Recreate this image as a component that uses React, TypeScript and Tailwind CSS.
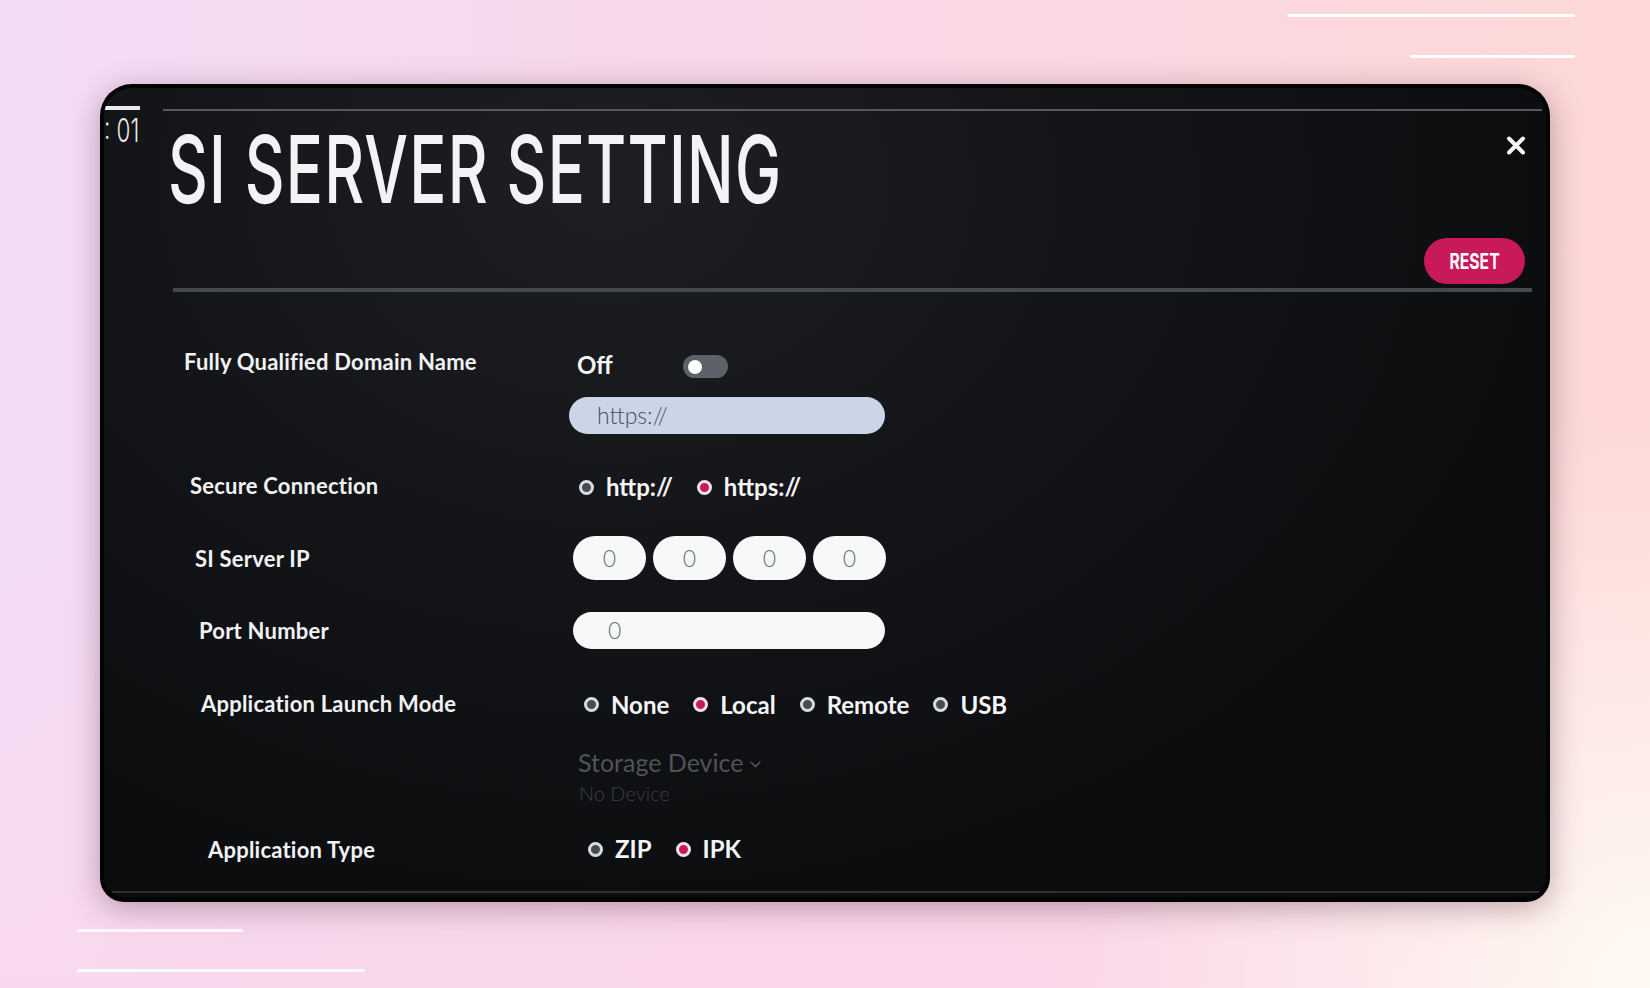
import { ChevronDown } from "lucide-react";

const label = "font-['Lato',sans-serif] font-bold text-[22px] text-[#f1f2f4] tracking-[0.01em]";
const option = "font-['Lato',sans-serif] font-bold text-[24px] text-[#f4f5f7]";

function Radio({ text, on }: { text: string; on?: boolean }) {
  return (
    <div className="flex items-center gap-[12px]">
      <span
        className={
          on
            ? "h-[15px] w-[15px] rounded-full border-[3px] border-[#f1e2e9] bg-[#c9195d]"
            : "h-[15px] w-[15px] rounded-full border-[3px] border-[#d8dbe0] bg-[#474b53]"
        }
      />
      <span className={option}>{text}</span>
    </div>
  );
}

function CloseIcon() {
  return (
    <svg width="20" height="21" viewBox="0 0 20 21" fill="none">
      <path d="M3 3.5 L17 17.5 M17 3.5 L3 17.5" stroke="#f5f6f8" strokeWidth="4" strokeLinecap="round" />
    </svg>
  );
}

export default function App() {
  return (
    <div className="flex h-[988px] w-[1650px] flex-col overflow-hidden bg-[radial-gradient(circle_at_100%_100%,#fffaf1_0%,rgba(255,250,241,0)_30%),linear-gradient(to_bottom,rgba(253,228,247,0)_55%,rgba(250,214,236,0.7)_100%),linear-gradient(to_right,#f3ddf6_0%,#f8d7ea_45%,#fdd8d6_100%)]">
      {/* top decoration */}
      <div className="flex h-[84px] flex-col items-end pr-[75px]">
        <div className="mt-[14px] h-[3px] w-[288px] rounded-full bg-white" />
        <div className="mt-[38px] h-[3px] w-[165px] rounded-full bg-white" />
      </div>

      {/* tv */}
      <div className="mx-[100px] h-[818px] rounded-t-[32px] rounded-b-[24px] bg-[#030303] px-[4px] pt-[4px] pb-[5px] shadow-[0_6px_30px_rgba(70,30,50,0.35)]">
        <div className="flex h-full flex-col overflow-hidden rounded-t-[28px] rounded-b-[20px] bg-[radial-gradient(ellipse_at_35%_12%,#1e1f23_0%,#131417_40%,#0b0c0e_78%)]">
          {/* top strip */}
          <div className="flex h-[26px] items-start pt-[18px]">
            <div className="h-[4px] w-[36px] bg-[#e9eaec]" />
            <div className="ml-[23px] mt-[3px] h-[2px] w-[1379px] bg-[#55585d]" />
          </div>

          {/* header */}
          <div className="flex h-[102px] items-start">
            <div className="w-[64px] pt-[1px]">
              <span className="inline-block origin-left scale-x-[0.7] font-['Inter',sans-serif] text-[32px] font-light leading-none text-[#e8e9eb]">
                : 01
              </span>
            </div>
            <div className="flex-1 pt-[8px]">
              <span className="inline-block origin-left scale-x-[0.656] font-['Inter',sans-serif] text-[94px] font-medium leading-none tracking-[0.02em] text-[#f2f3f5]">
                SI SERVER SETTING
              </span>
            </div>
            <div className="mr-[20px] mt-[21px]">
              <CloseIcon />
            </div>
          </div>

          {/* reset */}
          <div className="mt-[22px] flex justify-end pr-[21px]">
            <div className="flex h-[46px] w-[101px] items-center justify-center rounded-full bg-[#c81a5b]">
              <span className="inline-block scale-x-[0.75] font-['Inter',sans-serif] text-[21px] font-bold leading-none text-white">
                RESET
              </span>
            </div>
          </div>

          <div className="ml-[69px] mr-[14px] mt-[4px] h-[4px] bg-[#45484d]" />

          {/* fqdn */}
          <div className="mt-[57px] flex h-[28px] items-center">
            <div className={`w-[465px] pl-[80px] -mt-[4px] ${label}`}>Fully Qualified Domain Name</div>
            <span className={`ml-[8px] mt-[3px] ${option}`}>Off</span>
            <div className="ml-[70px] mt-[7px] flex h-[23px] w-[45px] items-center rounded-full bg-[#5d626a] pl-[5px]">
              <div className="h-[14px] w-[14px] rounded-full bg-white" />
            </div>
          </div>
          <div className="mt-[20px] flex h-[37px]">
            <div className="w-[465px]" />
            <div className="flex w-[316px] items-center rounded-full bg-[#cbd5e8] pl-[28px] font-['Lato',sans-serif] text-[23px] font-light text-[#4a4f58]">
              https://
            </div>
          </div>

          {/* secure */}
          <div className="mt-[37px] flex h-[28px] items-center">
            <div className={`w-[465px] pl-[86px] ${label}`}>Secure Connection</div>
            <div className="ml-[10px] mt-[4px] flex items-center gap-[24px]">
              <Radio text="http://" />
              <Radio text="https://" on />
            </div>
          </div>

          {/* ip */}
          <div className="mt-[37px] flex h-[44px] items-center">
            <div className={`w-[469px] pl-[91px] ${label}`}>SI Server IP</div>
            <div className="flex gap-[7px]">
              {["0", "0", "0", "0"].map((v, i) => (
                <div
                  key={i}
                  className="flex h-[44px] w-[73px] items-center justify-center rounded-full bg-[#f7f8f8] font-['Lato',sans-serif] text-[23px] font-light text-[#6d7179]"
                >
                  {v}
                </div>
              ))}
            </div>
          </div>

          {/* port */}
          <div className="mt-[32px] flex h-[37px] items-center">
            <div className={`w-[469px] pl-[95px] ${label}`}>Port Number</div>
            <div className="flex h-[37px] w-[312px] items-center rounded-full bg-[#f7f8f8] pl-[35px] font-['Lato',sans-serif] text-[23px] font-light text-[#6d7179]">
              0
            </div>
          </div>

          {/* launch mode */}
          <div className="mt-[40px] flex h-[28px] items-center">
            <div className={`w-[465px] pl-[97px] ${label}`}>Application Launch Mode</div>
            <div className="ml-[15px] mt-[3px] flex items-center gap-[24px]">
              <Radio text="None" />
              <Radio text="Local" on />
              <Radio text="Remote" />
              <Radio text="USB" />
            </div>
          </div>

          {/* storage */}
          <div className="mt-[33px] flex h-[26px] items-center">
            <div className="w-[474px]" />
            <span className="font-['Lato',sans-serif] text-[25px] text-[#505358]">Storage Device</span>
            <ChevronDown className="ml-[4px] mt-[3px] text-[#505358]" size={17} strokeWidth={2} />
          </div>
          <div className="mt-[6px] flex h-[22px] items-center">
            <div className="w-[475px]" />
            <span className="font-['Lato',sans-serif] text-[20px] font-light text-[#3c3e43]">No Device</span>
          </div>

          {/* type */}
          <div className="mt-[31px] flex h-[28px] items-center">
            <div className={`w-[465px] pl-[104px] ${label}`}>Application Type</div>
            <div className="ml-[19px] flex items-center gap-[24px]">
              <Radio text="ZIP" />
              <Radio text="IPK" on />
            </div>
          </div>

          <div className="mt-auto mb-[4px] ml-[8px] mr-[4px] h-[2px] bg-[#2d2f33]" />
        </div>
      </div>

      {/* bottom decoration */}
      <div className="flex flex-col items-start pl-[77px]">
        <div className="mt-[27px] h-[3px] w-[166px] rounded-full bg-white/80" />
        <div className="mt-[37px] h-[3px] w-[288px] rounded-full bg-white/90" />
      </div>
    </div>
  );
}
